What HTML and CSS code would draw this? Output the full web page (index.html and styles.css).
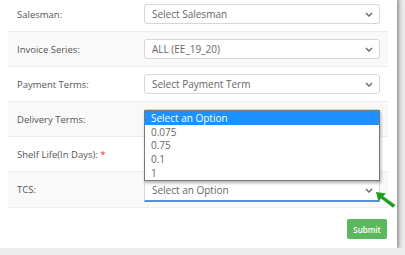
FILE: index.html
```html
<!DOCTYPE html>
<html lang="en">
<head>
  <meta charset="UTF-8" />
  <title>Order Details</title>
  <link rel="stylesheet" href="styles.css">
</head>
<body>
  <div class="modal">
    <div class="modal-body">
      <div class="form-row">
        <label>Salesman:</label>
        <div class="select"><span>Select Salesman</span><svg class="chev" viewBox="0 0 8 5"><path d="M1 1l3 3 3-3"/></svg></div>
      </div>
      <div class="form-row">
        <label>Invoice Series:</label>
        <div class="select"><span>ALL (EE_19_20)</span><svg class="chev" viewBox="0 0 8 5"><path d="M1 1l3 3 3-3"/></svg></div>
      </div>
      <div class="form-row">
        <label>Payment Terms:</label>
        <div class="select"><span>Select Payment Term</span><svg class="chev" viewBox="0 0 8 5"><path d="M1 1l3 3 3-3"/></svg></div>
      </div>
      <div class="form-row">
        <label>Delivery Terms:</label>
        <div class="select"></div>
      </div>
      <div class="form-row">
        <label>Shelf Life(In Days): <span class="req">*</span></label>
        <div class="select input"></div>
      </div>
      <div class="form-row">
        <label>TCS:</label>
        <div class="select focused">
          <span>Select an Option</span><svg class="chev" viewBox="0 0 8 5"><path d="M1 1l3 3 3-3"/></svg>
          <ul class="options">
            <li class="active">Select an Option</li>
            <li>0.075</li>
            <li>0.75</li>
            <li>0.1</li>
            <li>1</li>
          </ul>
          <svg class="pointer" viewBox="0 0 20 16"><path d="M0 0L10 1.5 7.2 4.2 19.5 13 17 15.8 5 6.6 2.4 9.5Z"/></svg>
        </div>
      </div>
    </div>
    <div class="modal-footer">
      <button class="btn-submit">Submit</button>
    </div>
  </div>
</body>
</html>
```

FILE: styles.css
```css
body {
  margin: 0;
  background: #ececec;
  font-family: 'Open Sans', sans-serif;
  overflow: hidden;
}
.modal {
  width: 397px;
  height: 251px;
  margin-top: -3px;
  background: #fff;
  box-shadow: 1px 1px 5px rgba(0, 0, 0, 0.55);
}
.modal-body {
  padding: 0 9px 0 8px;
}
.form-row {
  display: flex;
  align-items: center;
  height: 35px;
  padding-left: 9px;
  padding-right: 8px;
  border-bottom: 1px solid #eee;
  box-sizing: border-box;
}
.form-row:nth-child(even) {
  background: #f9f9f9;
}
.form-row:last-child {
  height: 36px;
}
.form-row label {
  width: 127px;
  font-size: 9.5px;
  color: #555;
}
.req {
  color: #e02b2b;
}
.select {
  position: relative;
  width: 236px;
  height: 20px;
  box-sizing: border-box;
  border: 1px solid #d6d6d6;
  border-radius: 3px;
  background: #fff;
  display: flex;
  align-items: center;
  justify-content: space-between;
  padding: 0 6px 0 7px;
  font-size: 10px;
  color: #666;
}
.select.focused {
  height: 22px;
  margin-top: 2px;
  border-bottom: 2px solid #5b8fd8;
  border-radius: 3px 3px 0 0;
}
.chev {
  width: 8px;
  height: 5px;
  fill: none;
  stroke: #666;
  stroke-width: 1.4;
}
.options {
  position: absolute;
  left: 0;
  bottom: 100%;
  width: 236px;
  box-sizing: border-box;
  margin: 0 0 0 -1px;
  padding: 0;
  list-style: none;
  background: #fff;
  border: 1px solid #7a7a7a;
  box-shadow: 1px 2px 3px rgba(0, 0, 0, 0.3);
}
.options li {
  height: 14px;
  line-height: 14px;
  padding-left: 6px;
  font-size: 10px;
  color: #666;
}
.options li:nth-child(2) {
  height: 13px;
}
.options li.active {
  background: #1e90ff;
  color: #fff;
}
.pointer {
  position: absolute;
  left: 231px;
  top: 11px;
  width: 20px;
  height: 16px;
  fill: #1ea01e;
}
.modal-footer {
  display: flex;
  justify-content: flex-end;
  padding: 11px 10px 0 0;
}
.btn-submit {
  width: 40px;
  height: 20px;
  padding: 0;
  border: none;
  border-radius: 2px;
  background: #5cb85c;
  color: #fff;
  font-family: 'Open Sans', sans-serif;
  font-size: 8px;
  font-weight: 600;
}
```
